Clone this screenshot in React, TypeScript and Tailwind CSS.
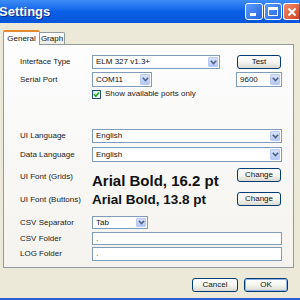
import React from "react";

const Chevron = () => (
  <svg width="7" height="5" viewBox="0 0 7 5">
    <path d="M0.8 0.8 L3.5 3.6 L6.2 0.8" fill="none" stroke="#4D6185" strokeWidth="1.5" />
  </svg>
);

function Combo({ w, h, text, cls = "" }: { w: number | string; h: number; text: string; cls?: string }) {
  return (
    <div
      className={"flex items-stretch border border-[#7F9DB9] bg-white " + cls}
      style={{ width: w, height: h }}
    >
      <div className="flex-1 flex items-center pl-[3px] text-[8px] text-[#111] overflow-hidden whitespace-nowrap">{text}</div>
      <div className="m-[1px] w-[10px] rounded-[1px] bg-gradient-to-b from-[#D6E2FC] to-[#B4C8F6] border border-[#B9CBF5] flex items-center justify-center">
        <Chevron />
      </div>
    </div>
  );
}

function Input({ h, text }: { h: number; text: string }) {
  return (
    <div className="flex-1 flex items-center border border-[#7F9DB9] bg-white pl-[3px] text-[8px] text-[#333]" style={{ height: h }}>
      {text}
    </div>
  );
}

function Btn({ w, h, text, def = false }: { w: number; h: number; text: string; def?: boolean }) {
  return (
    <div
      className="border border-[#003C74] rounded-[3px] bg-gradient-to-b from-white via-[#F5F5F0] to-[#DCDAD0] flex items-center justify-center text-[8px] text-[#111]"
      style={{ width: w, height: h }}
    >
      {def ? (
        <div className="w-full h-full rounded-[2px] border border-[#8CB1EA] flex items-center justify-center">{text}</div>
      ) : (
        text
      )}
    </div>
  );
}

function Label({ children }: { children: React.ReactNode }) {
  return <div className="w-[72px] shrink-0 text-[8px] text-[#222] whitespace-nowrap">{children}</div>;
}

export default function App() {
  return (
    <div
      className="w-[300px] h-[300px] overflow-hidden bg-[#ECE9D8] flex flex-col relative"
      style={{ fontFamily: '"Liberation Sans", Arial, sans-serif' }}
    >
      {/* Title bar */}
      <div className="h-[23px] shrink-0 bg-gradient-to-b from-[#3E8DF8] via-[#0A5FE6] to-[#0756DA] flex items-center">
        <div className="text-white font-bold text-[13px] leading-none [text-shadow:1px_1px_0_#0A2E8A] -ml-[1px] pb-[1px]">Settings</div>
        <div className="ml-auto flex items-center gap-[1px] mr-[1px]">
          <div className="w-[18px] h-[17px] rounded-[3px] border border-white bg-gradient-to-br from-[#5A9CFF] to-[#2463E0] relative">
            <div className="absolute left-[4px] bottom-[3px] w-[6px] h-[3px] bg-white" />
          </div>
          <div className="w-[18px] h-[17px] rounded-[3px] border border-white bg-gradient-to-br from-[#5A9CFF] to-[#2463E0] flex items-center justify-center">
            <div className="w-[10px] h-[9px] border border-white border-t-[3px]" />
          </div>
          <div className="w-[16px] h-[17px] rounded-l-[3px] border border-white border-r-0 bg-gradient-to-br from-[#F08A6A] to-[#D3401C] flex items-center justify-center">
            <svg width="10" height="10" viewBox="0 0 10 10">
              <path d="M1.5 1.5 L8.5 8.5 M8.5 1.5 L1.5 8.5" stroke="white" strokeWidth="2" />
            </svg>
          </div>
        </div>
      </div>

      {/* Tabs */}
      <div className="flex items-end ml-[3px] mt-[7px] h-[15px] relative z-10">
        <div className="w-[37px] h-[15px] bg-white border border-[#919B9C] border-b-0 border-t-[#E68B2C] border-t-2 rounded-t-[2px] flex items-center justify-center text-[8px] text-[#111]">
          General
        </div>
        <div className="w-[25px] h-[12px] bg-gradient-to-b from-white to-[#ECEBE6] border border-[#919B9C] border-l-0 border-b-0 rounded-tr-[2px] flex items-center justify-center text-[8px] text-[#111] mb-[1px]">
          Graph
        </div>
      </div>

      {/* Panel */}
      <div className="ml-[3px] -mt-[1px] w-[291px] h-[224px] border border-[#919B9C] bg-gradient-to-b from-[#FDFDFE] to-[#F4F3EE] flex flex-col pl-[16px] pr-[10px]">
        {/* Interface Type */}
        <div className="flex items-center mt-[10px] h-[14px]">
          <Label>Interface Type</Label>
          <Combo w={128} h={14} text="ELM 327 v1.3+" />
          <div className="ml-[17px] -mt-[1px]">
            <Btn w={44} h={14} text="Test" />
          </div>
        </div>
        {/* Serial Port */}
        <div className="flex items-center mt-[3px] h-[15px]">
          <Label>Serial Port</Label>
          <Combo w={60} h={15} text="COM11" />
          <div className="ml-[84px]">
            <Combo w={46} h={15} text="9600" />
          </div>
        </div>
        {/* Checkbox */}
        <div className="flex items-center mt-[2px] h-[10px] pl-[72px]">
          <div className="w-[9px] h-[9px] border border-[#1C5180] bg-gradient-to-br from-[#DCDCD7] to-white flex items-center justify-center">
            <svg width="7" height="7" viewBox="0 0 7 7">
              <path d="M1 3.3 L2.8 5.2 L6 1.4" fill="none" stroke="#21A121" strokeWidth="1.6" />
            </svg>
          </div>
          <div className="ml-[4px] text-[8px] text-[#222] whitespace-nowrap">Show available ports only</div>
        </div>
        {/* UI Language */}
        <div className="flex items-center mt-[30px] h-[14px]">
          <Label>UI Language</Label>
          <Combo w={190} h={14} text="English" />
        </div>
        {/* Data Language */}
        <div className="flex items-center mt-[4px] h-[15px]">
          <Label>Data Language</Label>
          <Combo w={190} h={15} text="English" />
        </div>
        {/* UI Font Grids */}
        <div className="flex items-start mt-[6px] h-[20px]">
          <div className="mt-[3px]">
            <Label>UI Font (Grids)</Label>
          </div>
          <div className="w-[145px] text-[15px] font-bold leading-none text-[#111] mt-[5px] whitespace-nowrap">Arial Bold, 16.2 pt</div>
          <Btn w={44} h={14} text="Change" />
        </div>
        {/* UI Font Buttons */}
        <div className="flex items-start mt-[3px] h-[16px]">
          <div className="mt-[3px]">
            <Label>UI Font (Buttons)</Label>
          </div>
          <div className="w-[145px] text-[13.5px] font-bold leading-none text-[#111] mt-[2px] whitespace-nowrap">Arial Bold, 13.8 pt</div>
          <div className="mt-[1px]">
            <Btn w={44} h={14} text="Change" />
          </div>
        </div>
        {/* CSV Separator */}
        <div className="flex items-center mt-[9px] h-[13px]">
          <Label>CSV Separator</Label>
          <Combo w={56} h={13} text="Tab" />
        </div>
        {/* CSV Folder */}
        <div className="flex items-center mt-[3px] h-[13px] w-[262px]">
          <Label>CSV Folder</Label>
          <Input h={13} text="." />
        </div>
        {/* LOG Folder */}
        <div className="flex items-center mt-[2px] h-[14px] w-[262px]">
          <Label>LOG Folder</Label>
          <Input h={14} text="." />
        </div>
      </div>

      {/* Bottom buttons */}
      <div className="flex mt-[10px] ml-[192px] gap-[6px]">
        <Btn w={46} h={14} text="Cancel" />
        <Btn w={44} h={14} text="OK" def />
      </div>

      <div className="absolute left-0 right-0 top-[298px] h-[2px] bg-[#2A5FD8]" />
    </div>
  );
}
